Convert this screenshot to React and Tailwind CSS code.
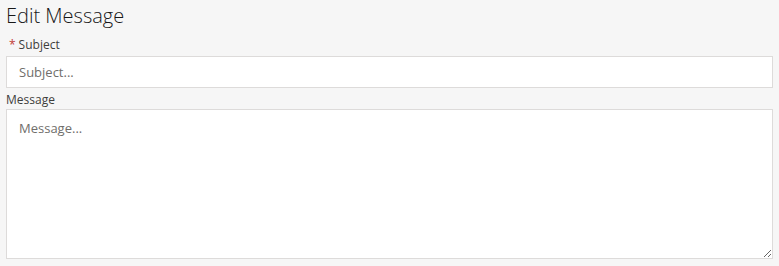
export default function App() {
  return (
    <div className="min-h-[266px] w-full bg-[#f6f6f6] px-[6px] pt-[2px] font-['Open_Sans',sans-serif] text-[#3e3e3c]">
      <h1 className="text-[20px] font-light leading-[28px] text-[#181818]">Edit Message</h1>
      <div className="mt-[6px]">
        <label className="flex items-center text-[12px] leading-[18px]">
          <abbr className="mx-[3px] text-[#c23934] no-underline" title="required">*</abbr>
          <span>Subject</span>
        </label>
        <input
          type="text"
          placeholder="Subject..."
          className="mt-[2px] block h-[32px] w-full border border-[#dddbda] bg-white px-[12px] text-[13px] text-[#080707] outline-none placeholder:text-[#706e6b]"
        />
      </div>
      <div className="mt-[3px]">
        <label className="block text-[12px] leading-[18px]">Message</label>
        <textarea
          placeholder="Message..."
          className="block h-[150px] w-full border border-[#dddbda] bg-white px-[12px] py-[8px] text-[13px] leading-[20px] text-[#080707] outline-none placeholder:text-[#706e6b]"
        />
      </div>
    </div>
  );
}
